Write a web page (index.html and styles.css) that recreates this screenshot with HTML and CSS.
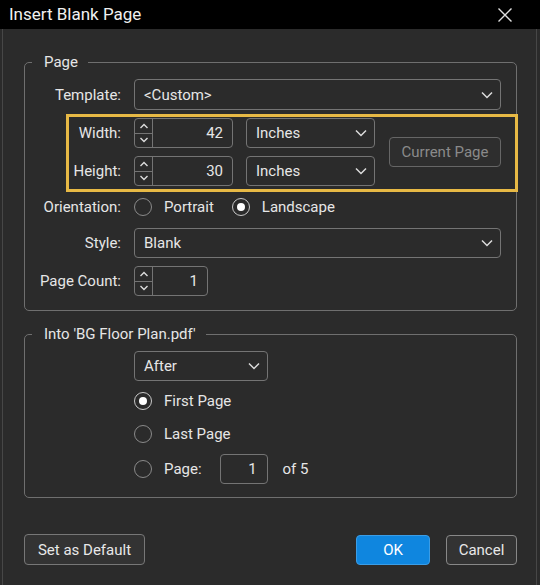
FILE: index.html
```html
<!DOCTYPE html>
<html>
<head>
<meta charset="utf-8">
<link rel="stylesheet" href="styles.css">
</head>
<body>
<div class="win">
  <div class="titlebar">
    <span class="title">Insert Blank Page</span>
    <svg class="close" width="16" height="16" viewBox="0 0 16 16"><path d="M1.5 1.5 L14.5 14.5 M14.5 1.5 L1.5 14.5" stroke="#e0e0e0" stroke-width="1.4" fill="none"/></svg>
  </div>
  <div class="body">
    <fieldset class="group g1">
      <legend>Page</legend>
      <div class="rows">
        <div class="row h31">
          <span class="lbl">Template:</span>
          <div class="select wide"><span>&lt;Custom&gt;</span><svg class="chev" width="12" height="8" viewBox="0 0 12 8"><path d="M1 1.5 L6 6.5 L11 1.5" stroke="#dcdcdc" stroke-width="1.5" fill="none"/></svg></div>
        </div>
        <div class="hl">
          <span class="lbl">Width:</span>
          <div class="spin w99"><div class="arrows"><span class="ar"><svg width="10" height="6" viewBox="0 0 10 6"><path d="M1.5 5 L5 1.5 L8.5 5" stroke="#dcdcdc" stroke-width="1.4" fill="none"/></svg></span><span class="ar"><svg width="10" height="6" viewBox="0 0 10 6"><path d="M1.5 1 L5 4.5 L8.5 1" stroke="#dcdcdc" stroke-width="1.4" fill="none"/></svg></span></div><span class="num">42</span></div>
          <div class="select"><span>Inches</span><svg class="chev" width="12" height="8" viewBox="0 0 12 8"><path d="M1 1.5 L6 6.5 L11 1.5" stroke="#dcdcdc" stroke-width="1.5" fill="none"/></svg></div>
          <button class="btn current">Current Page</button>
          <span class="lbl">Height:</span>
          <div class="spin w99"><div class="arrows"><span class="ar"><svg width="10" height="6" viewBox="0 0 10 6"><path d="M1.5 5 L5 1.5 L8.5 5" stroke="#dcdcdc" stroke-width="1.4" fill="none"/></svg></span><span class="ar"><svg width="10" height="6" viewBox="0 0 10 6"><path d="M1.5 1 L5 4.5 L8.5 1" stroke="#dcdcdc" stroke-width="1.4" fill="none"/></svg></span></div><span class="num">30</span></div>
          <div class="select"><span>Inches</span><svg class="chev" width="12" height="8" viewBox="0 0 12 8"><path d="M1 1.5 L6 6.5 L11 1.5" stroke="#dcdcdc" stroke-width="1.5" fill="none"/></svg></div>
        </div>
        <div class="row h26">
          <span class="lbl">Orientation:</span>
          <label class="opt"><span class="radio"></span>Portrait</label>
          <label class="opt sp"><span class="radio on"></span>Landscape</label>
        </div>
        <div class="row">
          <span class="lbl">Style:</span>
          <div class="select wide"><span>Blank</span><svg class="chev" width="12" height="8" viewBox="0 0 12 8"><path d="M1 1.5 L6 6.5 L11 1.5" stroke="#dcdcdc" stroke-width="1.5" fill="none"/></svg></div>
        </div>
        <div class="row">
          <span class="lbl">Page Count:</span>
          <div class="spin w74"><div class="arrows"><span class="ar"><svg width="10" height="6" viewBox="0 0 10 6"><path d="M1.5 5 L5 1.5 L8.5 5" stroke="#dcdcdc" stroke-width="1.4" fill="none"/></svg></span><span class="ar"><svg width="10" height="6" viewBox="0 0 10 6"><path d="M1.5 1 L5 4.5 L8.5 1" stroke="#dcdcdc" stroke-width="1.4" fill="none"/></svg></span></div><span class="num">1</span></div>
        </div>
      </div>
    </fieldset>
    <fieldset class="group g2">
      <legend>Into 'BG Floor Plan.pdf'</legend>
      <div class="rows2">
        <div class="select after"><span>After</span><svg class="chev" width="12" height="8" viewBox="0 0 12 8"><path d="M1 1.5 L6 6.5 L11 1.5" stroke="#dcdcdc" stroke-width="1.5" fill="none"/></svg></div>
        <label class="opt h26"><span class="radio on"></span>First Page</label>
        <label class="opt h26"><span class="radio"></span>Last Page</label>
        <div class="opt h30"><span class="radio"></span><span>Page:</span><div class="pagebox">1</div><span class="of">of 5</span></div>
      </div>
    </fieldset>
    <div class="footer">
      <button class="btn deflt">Set as Default</button>
      <div class="right">
        <button class="btn ok">OK</button>
        <button class="btn cancel">Cancel</button>
      </div>
    </div>
  </div>
</div>
</body>
</html>
```
FILE: styles.css
```css
html, body {
  margin: 0;
  padding: 0;
  background: #262626;
}
body {
  font-family: Roboto, "Liberation Sans", sans-serif;
  font-size: 15px;
  color: #e6e6e6;
}
.win {
  width: 540px;
  height: 585px;
  overflow: hidden;
  background: #2b2b2b;
}
.titlebar {
  height: 29px;
  background: #000;
  display: flex;
  align-items: center;
  justify-content: space-between;
  padding: 0 27px 0 9px;
}
.title {
  font-size: 17px;
  color: #f0f0f0;
  margin-top: -1px;
}
.close {
  display: block;
  margin-top: 1px;
}
.body {
  height: 556px;
  margin: 0 3px 0 2px;
  border-left: 1px solid #474747;
  border-right: 1px solid #474747;
  padding: 24px 19px 0 21px;
  box-sizing: border-box;
}
.group {
  margin: 0;
  padding: 0 15px 0 0;
  border: 1px solid #6f6f6f;
  border-radius: 5px;
  min-width: 0;
}
.group legend {
  margin-left: 7px;
  padding: 0 10px 0 12px;
  line-height: 18px;
  font-size: 15px;
  color: #e6e6e6;
}
.g2 {
  margin-top: 14px;
}
.rows {
  display: flex;
  flex-direction: column;
  gap: 8px;
  padding: 8px 0 14px 0;
}
.row {
  display: flex;
  align-items: center;
  gap: 13px;
  height: 30px;
}
.h31 { height: 31px; }
.h26 { height: 26px; }
.h30 { height: 30px; }
.lbl {
  width: 96px;
  flex: none;
  text-align: right;
}
.select {
  box-sizing: border-box;
  height: 30px;
  border: 1px solid #747474;
  border-radius: 4px;
  display: flex;
  align-items: center;
  justify-content: space-between;
  padding: 0 7px 0 9px;
  background: #2b2b2b;
}
.row .select { height: 100%; }
.select.wide { flex: 1; }
.chev { display: block; }
.hl {
  position: relative;
  display: grid;
  grid-template-columns: 96px 99px 129px 112px;
  grid-template-rows: 30px 30px;
  column-gap: 13px;
  row-gap: 8px;
  align-items: center;
}
.hl::after {
  content: "";
  position: absolute;
  left: 41px;
  top: -4px;
  right: -17px;
  bottom: -6px;
  border: 3px solid #e7b945;
  pointer-events: none;
}
.hl .select { height: 30px; }
.spin {
  box-sizing: border-box;
  height: 30px;
  border: 1px solid #747474;
  border-radius: 4px;
  display: flex;
  align-items: stretch;
}
.w99 { width: 99px; }
.w74 { width: 74px; }
.arrows {
  width: 17px;
  border-right: 1px solid #747474;
  display: flex;
  flex-direction: column;
}
.ar {
  flex: 1;
  display: flex;
  align-items: center;
  justify-content: center;
}
.ar + .ar { border-top: 1px solid #747474; }
.ar svg { display: block; }
.num {
  flex: 1;
  text-align: right;
  padding-right: 9px;
  display: flex;
  align-items: center;
  justify-content: flex-end;
}
.btn {
  font-family: Roboto, "Liberation Sans", sans-serif;
  font-size: 15px;
  box-sizing: border-box;
  height: 30px;
  border-radius: 4px;
  border: 1px solid #777;
  background: #333;
  color: #e8e8e8;
  padding: 0;
  cursor: default;
}
.current {
  grid-column: 4;
  grid-row: 1 / 3;
  align-self: center;
  width: 112px;
  margin-left: 1px;
  color: #8a8a8a;
  border-color: #666;
  background: #2e2e2e;
}
.opt {
  display: flex;
  align-items: center;
  gap: 12px;
}
.sp { margin-left: 5px; }
.radio {
  box-sizing: border-box;
  width: 18px;
  height: 18px;
  border-radius: 50%;
  border: 1.5px solid #8a8a8a;
  flex: none;
  display: flex;
  align-items: center;
  justify-content: center;
}
.radio.on {
  border-color: #c8c8c8;
}
.radio.on::after {
  content: "";
  width: 8px;
  height: 8px;
  border-radius: 50%;
  background: #fff;
}
.rows2 {
  display: flex;
  flex-direction: column;
  gap: 7px;
  padding: 8px 0 13px 109px;
}
.after {
  width: 134px;
}
.pagebox {
  box-sizing: border-box;
  width: 48px;
  height: 30px;
  border: 1px solid #747474;
  border-radius: 4px;
  display: flex;
  align-items: center;
  justify-content: flex-end;
  padding-right: 10px;
  margin-left: 6px;
}
.of { margin-left: 3px; }
.footer {
  display: flex;
  justify-content: space-between;
  align-items: center;
  margin-top: 36px;
  padding-left: 0;
}
.deflt {
  width: 121px;
  height: 31px;
}
.right {
  display: flex;
  gap: 16px;
}
.ok {
  width: 74px;
  background: #0f86df;
  border-color: #3b9de6;
  color: #fff;
}
.cancel {
  width: 71px;
  border-color: #888;
}
```
